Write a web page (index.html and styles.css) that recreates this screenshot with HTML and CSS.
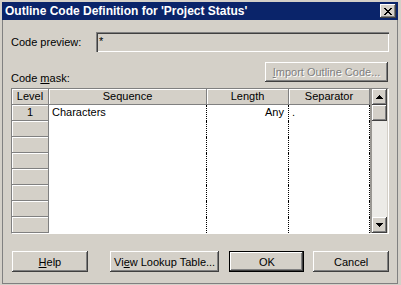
FILE: index.html
```html
<!DOCTYPE html>
<html lang="en">
<head>
  <meta charset="UTF-8">
  <title>Outline Code Definition</title>
  <link rel="stylesheet" href="styles.css">
</head>
<body>
  <div class="window">
    <div class="frame">
      <div class="titlebar">
        <span class="title">Outline Code Definition for 'Project Status'</span>
        <button class="close" type="button" aria-label="Close">
          <svg width="8" height="7" viewBox="0 0 8 7" shape-rendering="crispEdges">
            <path d="M0 0h2v1H0zM6 0h2v1H6zM1 1h2v1H1zM5 1h2v1H5zM2 2h4v1H2zM3 3h2v1H3zM2 4h4v1H2zM1 5h2v1H1zM5 5h2v1H5zM0 6h2v1H0zM6 6h2v1H6z" fill="#000"/>
          </svg>
        </button>
      </div>

      <div class="content">
        <div class="preview-row">
          <span class="field-label">Code preview:</span>
          <div class="preview-box">*</div>
        </div>

        <div class="mask-row">
          <span class="mask-label">Code <u>m</u>ask:</span>
          <button class="btn btn-import" type="button" disabled><u>I</u>mport Outline Code...</button>
        </div>

        <div class="grid-box">
          <div class="grid">
            <div class="hcell">Level</div>
            <div class="hcell">Sequence</div>
            <div class="hcell">Length</div>
            <div class="hcell">Separator</div>

            <div class="lcell">1</div>
            <div class="dcell">Characters</div>
            <div class="dcell num">Any</div>
            <div class="dcell">.</div>

            <div class="lcell"></div><div class="dcell"></div><div class="dcell"></div><div class="dcell"></div>
            <div class="lcell"></div><div class="dcell"></div><div class="dcell"></div><div class="dcell"></div>
            <div class="lcell"></div><div class="dcell"></div><div class="dcell"></div><div class="dcell"></div>
            <div class="lcell"></div><div class="dcell"></div><div class="dcell"></div><div class="dcell"></div>
            <div class="lcell"></div><div class="dcell"></div><div class="dcell"></div><div class="dcell"></div>
            <div class="lcell"></div><div class="dcell"></div><div class="dcell"></div><div class="dcell"></div>
            <div class="lcell"></div><div class="dcell"></div><div class="dcell"></div><div class="dcell"></div>
          </div>
          <div class="vscroll">
            <div class="sbtn">
              <svg width="7" height="4" viewBox="0 0 7 4" shape-rendering="crispEdges">
                <path d="M3 0h1v1H3zM2 1h3v1H2zM1 2h5v1H1zM0 3h7v1H0z" fill="#000"/>
              </svg>
            </div>
            <div class="thumb"></div>
            <div class="track"></div>
            <div class="sbtn">
              <svg width="7" height="4" viewBox="0 0 7 4" shape-rendering="crispEdges">
                <path d="M0 0h7v1H0zM1 1h5v1H1zM2 2h3v1H2zM3 3h1v1H3z" fill="#000"/>
              </svg>
            </div>
          </div>
        </div>

        <div class="actions">
          <button class="btn btn-help" type="button"><u>H</u>elp</button>
          <button class="btn btn-lookup" type="button">Vi<u>e</u>w Lookup Table...</button>
          <button class="btn btn-ok" type="button">OK</button>
          <button class="btn btn-cancel" type="button">Cancel</button>
        </div>
      </div>
    </div>
  </div>
</body>
</html>
```

FILE: styles.css
```css
body {
  margin: 0;
  background-color: #d4d0c8;
  font-family: 'Liberation Sans', Arial, sans-serif;
  font-size: 11px;
  color: #000;
}
.window {
  width: 401px;
  height: 285px;
  box-sizing: border-box;
  padding: 2px 3px 1px 2px;
  background-color: #d4d0c8;
}
.frame {
  height: 100%;
  box-sizing: border-box;
  border: 1px solid #808080;
  border-top: 0;
  display: flex;
  flex-direction: column;
}
.titlebar {
  height: 18px;
  background-color: #0a246a;
  display: flex;
  align-items: center;
  justify-content: space-between;
  padding: 0 2px 0 3px;
  margin: 0 -1px;
}
.title {
  color: #fff;
  font-weight: bold;
  font-size: 12px;
  line-height: 17px;
  padding-top: 1px;
  white-space: nowrap;
}
.close {
  width: 16px;
  height: 14px;
  padding: 0;
  border: 0;
  background-color: #d4d0c8;
  box-shadow: inset -1px -1px #404040, inset 1px 1px #fff, inset -2px -2px #808080;
  display: flex;
  align-items: center;
  justify-content: center;
}
.close svg {
  margin-left: -1px;
}
.content {
  flex: 1;
  padding: 0 8px 0 8px;
  display: flex;
  flex-direction: column;
}
.preview-row {
  display: flex;
  align-items: center;
  margin-top: 12px;
  height: 20px;
}
.field-label {
  width: 85px;
}
.preview-box {
  flex: 1;
  height: 20px;
  box-sizing: border-box;
  padding: 2px 3px;
  background-color: #d4d0c8;
  box-shadow: inset 1px 1px #808080, inset 2px 2px #404040, inset -1px -1px #fff, inset -2px -2px #d4d0c8;
  line-height: 14px;
}
.mask-row {
  display: flex;
  justify-content: space-between;
  align-items: flex-end;
  margin-top: 10px;
}
.mask-label {
  line-height: 13px;
  margin-bottom: -3px;
}
.btn {
  font-family: inherit;
  font-size: 11px;
  color: #000;
  height: 21px;
  padding: 0;
  border: 0;
  background-color: #d4d0c8;
  box-shadow: inset -1px -1px #404040, inset 1px 1px #fff, inset -2px -2px #808080;
}
.btn-import {
  width: 123px;
  height: 20px;
  margin-right: 1px;
  color: #808080;
  text-shadow: 1px 1px #fff;
}
.grid-box {
  margin-top: 6px;
  display: flex;
  border: 1px solid #808080;
  border-right-color: #fff;
  border-bottom-color: #fff;
}
.grid {
  display: grid;
  grid-template-columns: 37px 158px 82px 81px;
  grid-auto-rows: 16px;
}
.hcell, .lcell, .dcell {
  box-sizing: border-box;
  line-height: 15px;
  white-space: nowrap;
}
.hcell {
  background-color: #d4d0c8;
  text-align: center;
  border-right: 1px solid #808080;
  border-bottom: 1px solid #808080;
  box-shadow: inset 1px 1px #fff;
}
.lcell {
  background-color: #d4d0c8;
  text-align: center;
  border-right: 1px solid #808080;
  border-bottom: 1px solid #808080;
  box-shadow: inset 1px 1px #fff;
}
.dcell {
  background-color: #fff;
  padding: 0 3px;
  border-right: 1px dotted #000;
}
.dcell.num {
  text-align: right;
  padding-right: 4px;
}
.vscroll {
  width: 17px;
  display: flex;
  flex-direction: column;
  padding-left: 2px;
  box-sizing: border-box;
  background-color: #ecebe7;
  box-shadow: inset 2px 0 #9a9893;
}
.sbtn {
  height: 16px;
  background-color: #d4d0c8;
  box-shadow: inset -1px -1px #404040, inset 1px 1px #fff, inset -2px -2px #808080;
  display: flex;
  align-items: center;
  justify-content: center;
}
.thumb {
  height: 16px;
  background-color: #d4d0c8;
  box-shadow: inset -1px -1px #404040, inset 1px 1px #fff, inset -2px -2px #808080;
}
.track {
  flex: 1;
}
.actions {
  display: flex;
  margin-top: 17px;
}
.btn-help {
  width: 76px;
  margin-left: 1px;
}
.btn-lookup {
  width: 110px;
  margin-left: 22px;
}
.btn-ok {
  width: 75px;
  margin-left: 10px;
  border: 1px solid #000;
}
.btn-cancel {
  width: 76px;
  margin-left: 9px;
}
```
